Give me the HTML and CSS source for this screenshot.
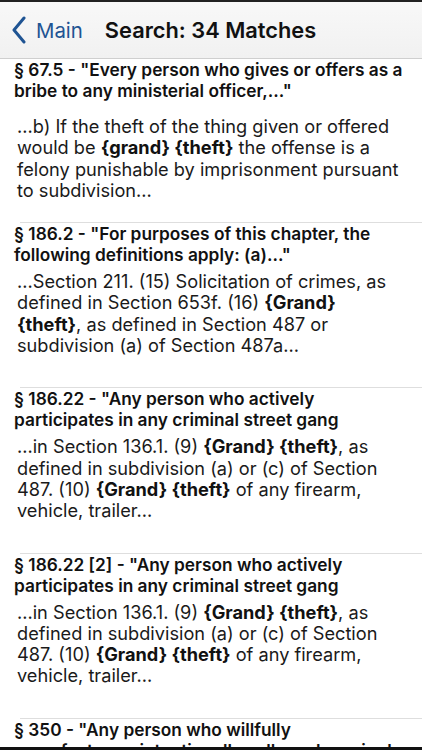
FILE: index.html
```html
<!DOCTYPE html>
<html>
<head>
<meta charset="utf-8">
<link rel="stylesheet" href="styles.css">
</head>
<body>
<div class="topline"></div>
<header class="nav">
  <div class="back">
    <svg class="chev" width="16" height="28" viewBox="0 0 16 28"><path d="M13 2 L3 14 L13 26" fill="none" stroke="#1f5493" stroke-width="3" stroke-linecap="round" stroke-linejoin="round"/></svg>
    <span class="back-label">Main</span>
  </div>
  <div class="title">Search: 34 Matches</div>
</header>
<main class="list">
  <section class="item first">
    <h2 class="ititle">§ 67.5 - "Every person who gives or offers as a bribe to any ministerial officer,..."</h2>
    <p class="ibody">...b) If the theft of the thing given or offered would be <b>{grand} {theft}</b> the offense is a felony punishable by imprisonment pursuant to subdivision...</p>
  </section>
  <section class="item">
    <h2 class="ititle">§ 186.2 - "For purposes of this chapter, the following definitions apply: (a)..."</h2>
    <p class="ibody">...Section 211. (15) Solicitation of crimes, as defined in Section 653f. (16) <b>{Grand}</b> <b>{theft}</b>, as defined in Section 487 or subdivision (a) of Section 487a...</p>
  </section>
  <section class="item">
    <h2 class="ititle">§ 186.22 - "Any person who actively participates in any criminal street gang</h2>
    <p class="ibody">...in Section 136.1. (9) <b>{Grand} {theft}</b>, as defined in subdivision (a) or (c) of Section 487. (10) <b>{Grand} {theft}</b> of any firearm, vehicle, trailer...</p>
  </section>
  <section class="item">
    <h2 class="ititle">§ 186.22 [2] - "Any person who actively participates in any criminal street gang</h2>
    <p class="ibody">...in Section 136.1. (9) <b>{Grand} {theft}</b>, as defined in subdivision (a) or (c) of Section 487. (10) <b>{Grand} {theft}</b> of any firearm, vehicle, trailer...</p>
  </section>
  <section class="item">
    <h2 class="ititle">§ 350 - "Any person who willfully manufactures, intentionally sells, or knowingly possesses for sale any counterfeit mark</h2>
    <p class="ibody">...</p>
  </section>
</main>
<div class="bottombar"></div>
</body>
</html>
```

FILE: styles.css
```css
html, body {
  margin: 0;
  padding: 0;
  background: #fff;
  overflow: hidden;
  height: 750px;
}
body {
  font-family: Inter, "Liberation Sans", Arial, sans-serif;
  color: #111;
}
.topline {
  height: 2px;
  background: #222;
}
.nav {
  height: 57px;
  background: linear-gradient(#f8f8f8, #f1f1f1);
  border-bottom: 1px solid #cfcfcf;
  display: flex;
  align-items: center;
  box-sizing: border-box;
  padding-left: 11px;
}
.back {
  display: flex;
  align-items: center;
  gap: 9px;
}
.chev {
  display: block;
}
.back-label {
  font-size: 20.4px;
  color: #1f5493;
}
.title {
  margin-left: 22px;
  font-size: 21.8px;
  font-weight: 600;
  color: #111;
}
.list {
  display: flex;
  flex-direction: column;
}
.item {
  border-top: 1px solid #dedede;
  margin-left: 20px;
  padding: 0 0 31px 0;
}
.item.first {
  border-top: none;
  padding-bottom: 21px;
}
.ititle {
  margin: 0 0 0 -6px;
  font-size: 17.3px;
  line-height: 21px;
  font-weight: 600;
  padding-right: 8px;
}
.ibody {
  margin: 6px 0 0 -3px;
  font-size: 18.2px;
  line-height: 21.3px;
  padding-right: 20px;
  color: #1a1a1a;
}
.ibody b {
  font-weight: 700;
  color: #111;
}
.first .ibody {
  margin-top: 15px;
}
.bottombar {
  position: fixed;
  left: 0;
  right: 0;
  bottom: 0;
  height: 3px;
  background: #111;
}
```
